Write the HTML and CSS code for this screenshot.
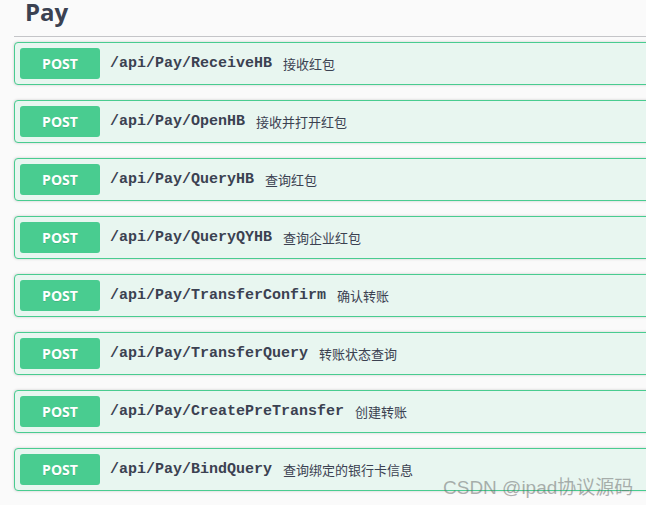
FILE: index.html
```html
<!DOCTYPE html>
<html>
<head>
<meta charset="utf-8">
<link rel="stylesheet" href="styles.css">
</head>
<body>
<div class="section">
  <h4 class="tag">Pay</h4>
  <div class="ops">
    <div class="op"><span class="method">POST</span><span class="path">/api/Pay/ReceiveHB</span><span class="desc">接收红包</span></div>
    <div class="op"><span class="method">POST</span><span class="path">/api/Pay/OpenHB</span><span class="desc">接收并打开红包</span></div>
    <div class="op"><span class="method">POST</span><span class="path">/api/Pay/QueryHB</span><span class="desc">查询红包</span></div>
    <div class="op"><span class="method">POST</span><span class="path">/api/Pay/QueryQYHB</span><span class="desc">查询企业红包</span></div>
    <div class="op"><span class="method">POST</span><span class="path">/api/Pay/TransferConfirm</span><span class="desc">确认转账</span></div>
    <div class="op"><span class="method">POST</span><span class="path">/api/Pay/TransferQuery</span><span class="desc">转账状态查询</span></div>
    <div class="op"><span class="method">POST</span><span class="path">/api/Pay/CreatePreTransfer</span><span class="desc">创建转账</span></div>
    <div class="op"><span class="method">POST</span><span class="path">/api/Pay/BindQuery</span><span class="desc">查询绑定的银行卡信息</span></div>
  </div>
</div>
<div class="watermark">CSDN @ipad协议源码</div>
</body>
</html>
```
FILE: styles.css
```css
html, body {
  margin: 0;
  padding: 0;
  background: #fafafa;
  overflow: hidden;
  width: 646px;
  height: 505px;
}
body {
  position: relative;
  font-family: "Open Sans", "Noto Sans CJK SC", sans-serif;
  color: #3b4151;
}
.section {
  padding-left: 14px;
  width: 660px;
}
.tag {
  margin: 0;
  padding: 0 0 0 11px;
  font-size: 24px;
  font-weight: 700;
  line-height: 24px;
  height: 36px;
  border-bottom: 1px solid #c4c5c8;
  color: #3b4151;
}
.ops {
  display: flex;
  flex-direction: column;
  gap: 15px;
  padding-top: 5px;
}
.op {
  display: flex;
  align-items: center;
  height: 31px;
  padding: 5px;
  border: 1px solid #49cc90;
  border-radius: 4px;
  background: #e8f6f0;
  box-shadow: 0 0 3px rgba(0,0,0,.19);
}
.method {
  width: 80px;
  height: 31px;
  display: flex;
  align-items: center;
  justify-content: center;
  background: #49cc90;
  border-radius: 3px;
  color: #fff;
  font-family: "Open Sans", sans-serif;
  font-weight: 700;
  font-size: 14px;
  text-shadow: 0 1px 0 rgba(0,0,0,.1);
}
.path {
  margin-left: 10px;
  font-family: "Liberation Mono", monospace;
  font-weight: 700;
  font-size: 15px;
  color: #3b4151;
}
.desc {
  margin-left: 11px;
  font-family: "Noto Sans CJK SC", sans-serif;
  font-size: 13px;
  color: #3b4151;
}
.watermark {
  position: absolute;
  left: 443px;
  top: 472px;
  font-family: "Liberation Sans", "Noto Sans CJK SC", sans-serif;
  font-size: 19px;
  color: rgba(100,100,100,.5);
  white-space: nowrap;
}
```
